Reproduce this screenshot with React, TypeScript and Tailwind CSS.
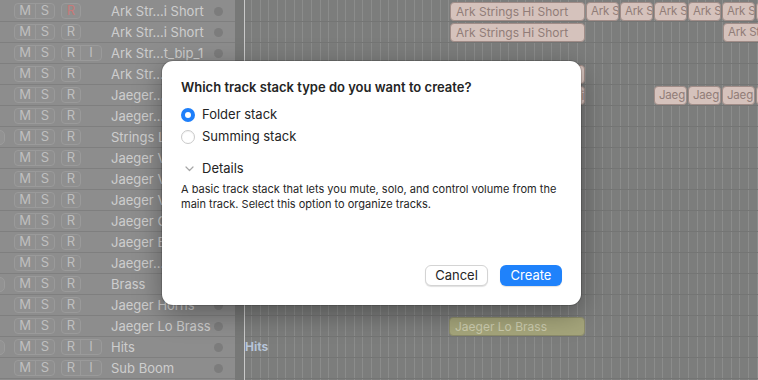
import React from "react";

type Track = { name: string; r?: boolean; i?: boolean; red?: boolean; stack?: boolean };

const tracks: Track[] = [
  { name: "Ark Str...i Short", red: true },
  { name: "Ark Str...i Short" },
  { name: "Ark Str...t_bip_1", i: true },
  { name: "Ark Str..." },
  { name: "Jaeger..." },
  { name: "Jaeger..." },
  { name: "Strings L", stack: true },
  { name: "Jaeger V" },
  { name: "Jaeger V" },
  { name: "Jaeger V" },
  { name: "Jaeger C" },
  { name: "Jaeger B" },
  { name: "Jaeger..." },
  { name: "Brass", stack: true },
  { name: "Jaeger Horns" },
  { name: "Jaeger Lo Brass" },
  { name: "Hits", i: true, stack: true },
  { name: "Sub Boom", i: true },
];

type Region = { x: number; w: number; label: string; olive?: boolean; small?: boolean };

const regions: Region[][] = [
  [
    { x: 205, w: 135, label: "Ark Strings Hi Short" },
    { x: 341, w: 33, label: "Ark S", small: true },
    { x: 375, w: 33, label: "Ark S", small: true },
    { x: 409, w: 33, label: "Ark S", small: true },
    { x: 443, w: 33, label: "Ark S", small: true },
    { x: 477, w: 33, label: "Ark S", small: true },
    { x: 511, w: 33, label: "Ark S", small: true },
  ],
  [
    { x: 205, w: 135, label: "Ark Strings Hi Short" },
    { x: 478, w: 60, label: "Ark Strings", small: true },
  ],
  [],
  [{ x: 205, w: 135, label: "Ark Strings Hi Short" }],
  [
    { x: 205, w: 135, label: "Ark Strings Hi Short_bip" },
    { x: 409, w: 33, label: "Jaeg", small: true },
    { x: 443, w: 33, label: "Jaeg", small: true },
    { x: 477, w: 33, label: "Jaeg", small: true },
    { x: 511, w: 33, label: "Jaeg", small: true },
  ],
  [], [], [], [], [], [], [], [], [], [],
  [{ x: 204, w: 136, label: "Jaeger Lo Brass", olive: true }],
  [],
  [],
];

function HeaderRow({ t }: { t: Track }) {
  return (
    <div className="relative flex h-[21px] items-center border-b border-[#7f7f7f] pb-[1px]">
      {t.stack && (
        <div className="absolute left-[-9px] top-[3px] h-[15px] w-[14px] rounded-[5px] border border-[#9b9b9b] bg-[#929292]" />
      )}
      <div className="ml-[14px] flex h-[16px] w-[41px] items-center rounded-[4px] border border-[#9a9a9a] bg-[#8f8f8f] text-[13px] leading-none text-[#bfbfbf]">
        <span className="flex h-full w-[21px] items-center justify-center border-r border-[#9a9a9a]">M</span>
        <span className="flex h-full flex-1 items-center justify-center">S</span>
      </div>
      <div
        className={
          "ml-[6px] flex h-[16px] items-center rounded-[4px] border border-[#9a9a9a] bg-[#8f8f8f] text-[13px] leading-none text-[#bfbfbf] " +
          (t.i ? "w-[41px]" : "w-[20px]")
        }
      >
        <span
          className={
            "flex h-full w-[19px] items-center justify-center " +
            (t.i ? "border-r border-[#9a9a9a] " : "") +
            (t.red ? "text-[#c77a78]" : "")
          }
        >
          R
        </span>
        {t.i && <span className="flex h-full flex-1 items-center justify-center">I</span>}
      </div>
      <div className={"absolute left-[111px] top-[1px] text-[13px] leading-[19px] text-[#cdcdcd]"}>{t.name}</div>
      <div className="absolute left-[214px] top-[6px] h-[9px] w-[9px] rounded-full bg-[#7c7c7c]" />
    </div>
  );
}

function ArrRow({ regs, idx }: { regs: Region[]; idx: number }) {
  return (
    <div className="relative h-[21px] border-b border-[#747574]">
      {idx === 16 && (
        <div className="absolute left-[0px] top-[2px] text-[12px] font-bold leading-[16px] text-[#b6c4d8]">Hits</div>
      )}
      {regs.map((r, k) => (
        <div
          key={k}
          className={
            "absolute top-[1px] h-[19px] overflow-hidden whitespace-nowrap rounded-[4px] border leading-[17px] " +
            (r.small ? "pl-[4px] text-[11.5px] tracking-[-0.2px] " : "pl-[5px] text-[12px] ") +
            (r.olive
              ? "border-[#8c8c6a] bg-[#a5a57b] text-[#cdcdb0]"
              : "border-[#a08c87] bg-[#d5c2bc] text-[#917d78]")
          }
          style={{ left: r.x, width: r.w }}
        >
          {r.label}
        </div>
      ))}
    </div>
  );
}

function Radio({ on }: { on: boolean }) {
  return on ? (
    <div className="flex h-[14px] w-[14px] items-center justify-center rounded-full bg-[#1e7ffa]">
      <div className="h-[6px] w-[6px] rounded-full bg-white" />
    </div>
  ) : (
    <div className="h-[14px] w-[14px] rounded-full border border-[#c9c9c9] bg-white shadow-[inset_0_1px_1px_rgba(0,0,0,0.05)]" />
  );
}

export default function App() {
  return (
    <div
      className="relative flex h-[380px] w-[758px] overflow-hidden bg-[#7c7d7c]"
      style={{ fontFamily: "Inter, 'Noto Sans', sans-serif" }}
    >
      <div className="flex w-[235px] shrink-0 flex-col bg-[#8d8d8d] pt-[1px]">
        {tracks.map((t, i) => (
          <HeaderRow key={i} t={t} />
        ))}
      </div>
      <div className="w-[9px] shrink-0 bg-[#777877]" />
      <div className="w-[1px] shrink-0 bg-[#c9c9c9]" />
      <div className="flex flex-1 flex-col bg-[#7c7d7c] bg-[repeating-linear-gradient(90deg,transparent_0_6px,#8b8c8b_6px_7px,transparent_7px_8.57px)] pt-[1px]">
        {regions.map((r, i) => (
          <ArrRow key={i} regs={r} idx={i} />
        ))}
      </div>

      {/* dialog */}
      <div className="absolute left-[162px] top-[61px] flex h-[244px] w-[419px] flex-col rounded-[11px] bg-white px-[19px] pt-[16px] shadow-[0_8px_28px_rgba(0,0,0,0.35)] ring-1 ring-black/15">
        <div className="text-[13px] font-semibold leading-[20px] text-[#242424]">
          Which track stack type do you want to create?
        </div>
        <div className="mt-[9px] flex h-[17px] items-center gap-[6px] text-[13px] text-[#242424]">
          <Radio on />
          <span className="ml-[1px]">Folder stack</span>
        </div>
        <div className="mt-[5px] flex h-[17px] items-center gap-[6px] text-[13px] text-[#242424]">
          <Radio on={false} />
          <span className="ml-[1px]">Summing stack</span>
        </div>
        <div className="mt-[15px] flex h-[17px] items-center text-[13px] text-[#242424]">
          <svg width="9" height="6" viewBox="0 0 9 6" className="ml-[4px]">
            <path d="M1 1 L4.5 4.5 L8 1" fill="none" stroke="#a6a6a6" strokeWidth="1.2" strokeLinecap="round" strokeLinejoin="round" />
          </svg>
          <span className="ml-[8px]">Details</span>
        </div>
        <div className="mt-[5px] text-[11px] leading-[14.5px] text-[#262626]">
          A basic track stack that lets you mute, solo, and control volume from the
          <br />
          main track. Select this option to organize tracks.
        </div>
        <div className="mt-auto mb-[19px] flex justify-end gap-[12px]">
          <button className="h-[21px] w-[63px] rounded-[6px] border border-[#d4d4d4] bg-white text-[13px] leading-none text-[#262626] shadow-[0_1px_1px_rgba(0,0,0,0.12)]">
            Cancel
          </button>
          <button className="h-[21px] w-[62px] rounded-[6px] bg-[#1f82fb] text-[13px] leading-none text-white shadow-[0_1px_1px_rgba(0,0,0,0.12)]">
            Create
          </button>
        </div>
      </div>
    </div>
  );
}
